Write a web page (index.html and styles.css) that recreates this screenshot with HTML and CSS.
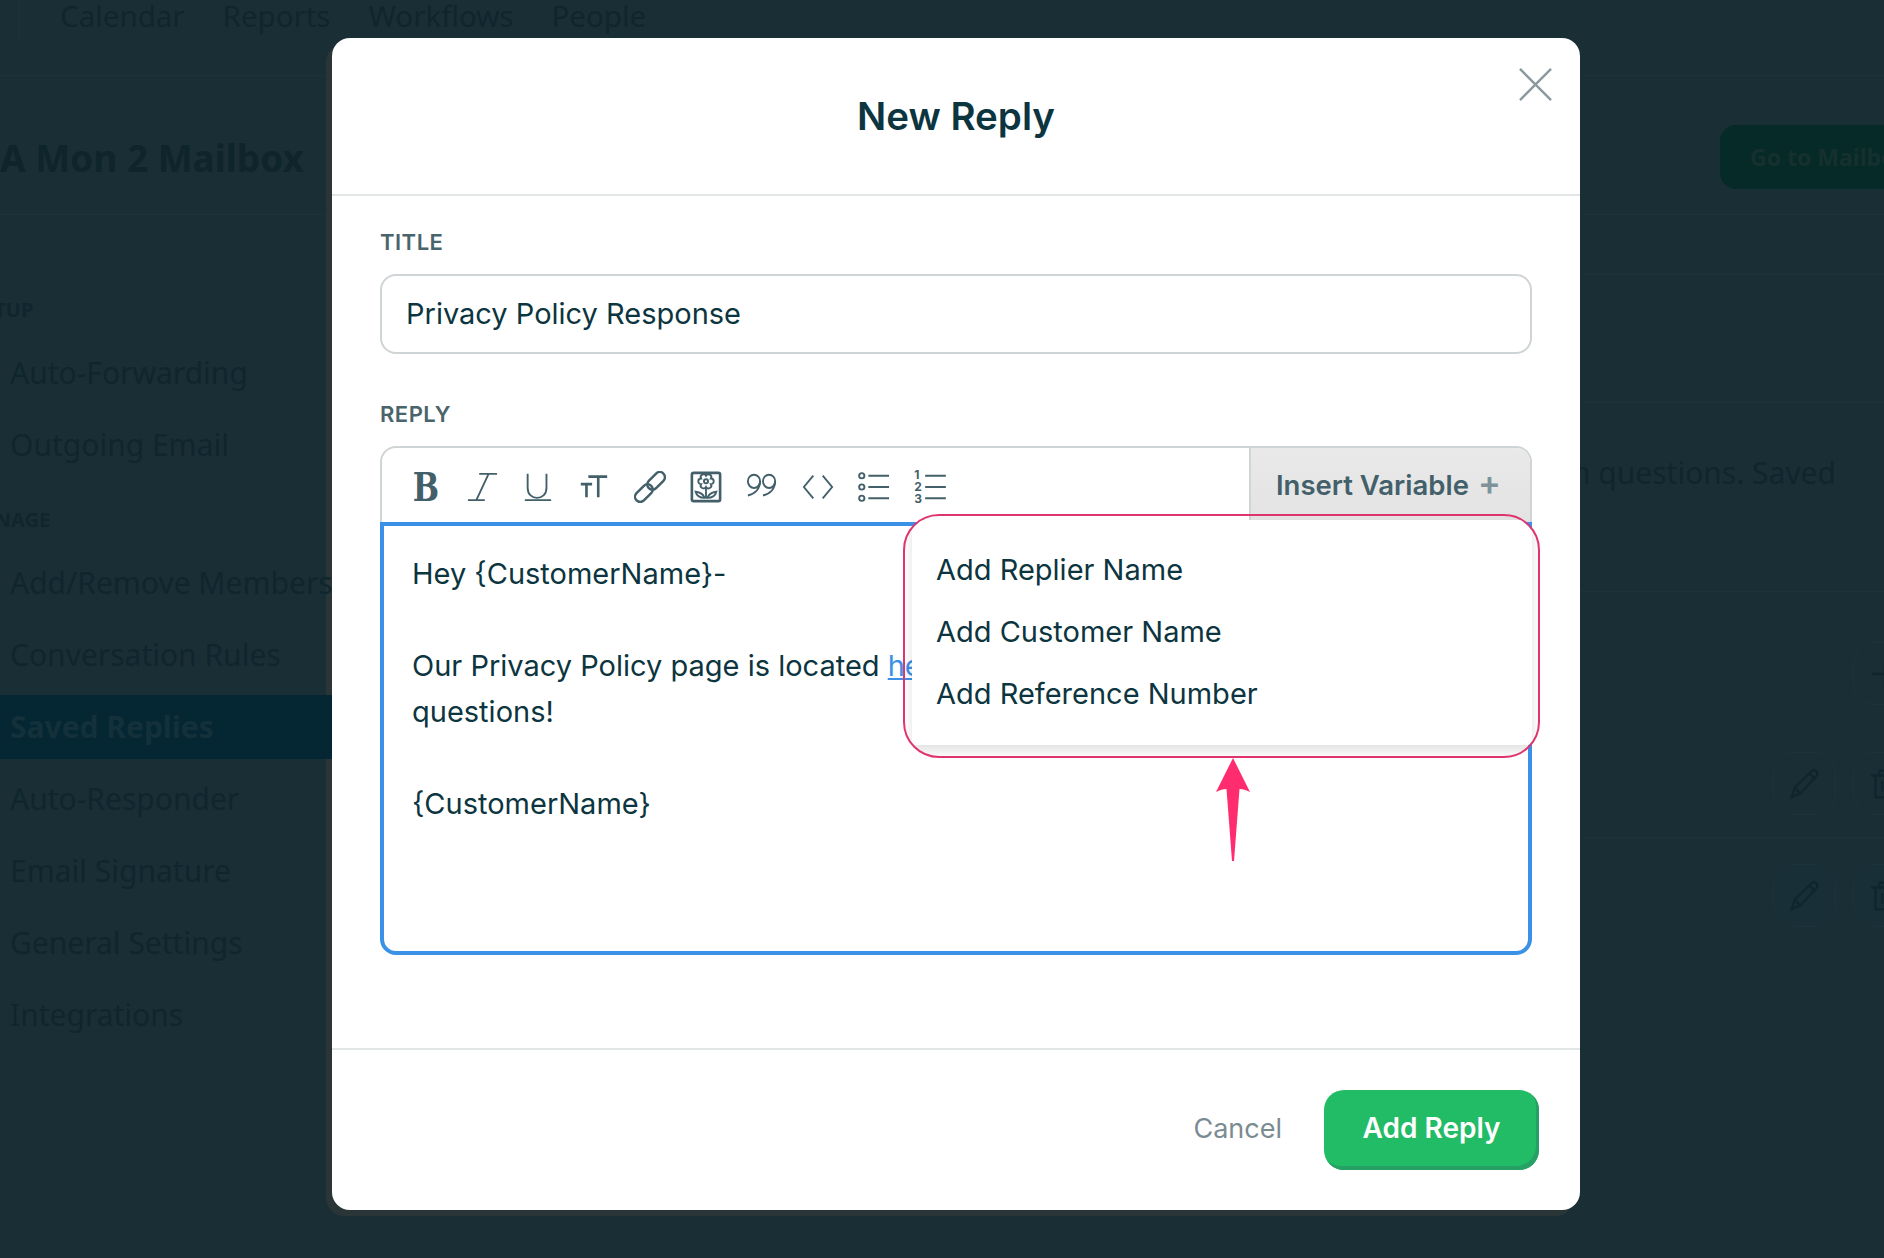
FILE: index.html
```html
<!DOCTYPE html>
<html lang="en">
<head>
    <meta charset="UTF-8">
    <meta name="viewport" content="width=device-width, initial-scale=1.0">
    <title>New Reply</title>
    <link rel="stylesheet" href="styles.css">
</head>
<body>
    <!-- dimmed page behind the dialog -->
    <div class="page">
        <nav class="topnav">
            <span class="topnav-rule"></span>
            <a class="topnav-link">Calendar</a>
            <a class="topnav-link">Reports</a>
            <a class="topnav-link">Workflows</a>
            <a class="topnav-link">People</a>
        </nav>
        <header class="page-header">
            <h1 class="page-title">A Mon 2 Mailbox</h1>
            <a class="goto-button">Go to Mailbox</a>
        </header>
        <div class="page-main">
            <aside class="sidebar">
                <div class="side-heading side-heading-first">SETUP</div>
                <a class="side-link">Auto-Forwarding</a>
                <a class="side-link">Outgoing Email</a>
                <div class="side-heading">MANAGE</div>
                <a class="side-link">Add/Remove Members</a>
                <a class="side-link">Conversation Rules</a>
                <a class="side-link side-link-active">Saved Replies</a>
                <a class="side-link">Auto-Responder</a>
                <a class="side-link">Email Signature</a>
                <a class="side-link">General Settings</a>
                <a class="side-link">Integrations</a>
            </aside>
            <section class="content">
                <div class="content-tabs"></div>
                <div class="content-heading"></div>
                <div class="content-desc">Use saved replies to answer common questions. Saved</div>
                <div class="list-head">
                    <span class="round-button">
                        <svg class="ghost-icon" viewBox="0 0 36 36"><path d="M4 18h28M18 4v28"/></svg>
                    </span>
                </div>
                <div class="list-row">
                    <span class="round-button">
                        <svg class="ghost-icon" viewBox="0 0 36 36"><path d="M4 32l3-10L25 4.500c1.500-1.500 3.500-1.500 5 0s1.500 3.500 0 5L13 28zM7 22l6 6M23 7l6 6"/></svg>
                    </span>
                    <span class="round-button">
                        <svg class="ghost-icon" viewBox="0 0 36 36"><path d="M3 9h30M12 9V4h12v5M8 9v23h20V9M15 15v11M21 15v11"/></svg>
                    </span>
                </div>
                <div class="list-row list-row-hover">
                    <span class="round-button">
                        <svg class="ghost-icon" viewBox="0 0 36 36"><path d="M4 32l3-10L25 4.500c1.500-1.500 3.500-1.500 5 0s1.500 3.500 0 5L13 28zM7 22l6 6M23 7l6 6"/></svg>
                    </span>
                    <span class="round-button">
                        <svg class="ghost-icon" viewBox="0 0 36 36"><path d="M3 9h30M12 9V4h12v5M8 9v23h20V9M15 15v11M21 15v11"/></svg>
                    </span>
                </div>
            </section>
        </div>
    </div>

    <div class="modal">
        <div class="modal-header">
            <h2 class="modal-title">New Reply</h2>
            <svg class="modal-close" viewBox="0 0 34 34"><path d="M1 1l32 32M33 1L1 33"/></svg>
        </div>

        <div class="modal-body">
            <div class="field-label">TITLE</div>
            <div class="text-input">Privacy Policy Response</div>

            <div class="field-label">REPLY</div>
            <div class="editor-wrap">
                <div class="toolbar">
                    <div class="tool-group">
                        <span class="tool tool-bold">B</span>
                        <span class="tool">
                            <svg class="tool-icon" viewBox="0 0 34 34"><path d="M14 3h19M2 31h18M24 3L11 31"/></svg>
                        </span>
                        <span class="tool">
                            <svg class="tool-icon" viewBox="0 0 34 34"><path d="M6 3v15c0 14 20 14 20 0V3M3 31h28"/></svg>
                        </span>
                        <span class="tool">
                            <svg class="tool-icon tool-icon-heavy" viewBox="0 0 34 34"><path d="M11 6h20M21.500 6v22M3 14h12M9 14v14"/></svg>
                        </span>
                        <span class="tool">
                            <svg class="tool-icon tool-icon-link" viewBox="0 0 34 34"><rect x="12.500" y="5" width="22" height="11" rx="5.500" transform="rotate(-45 23.500 10.500)"/><rect x="-0.500" y="18" width="22" height="11" rx="5.500" transform="rotate(-45 10.500 23.500)"/></svg>
                        </span>
                        <span class="tool">
                            <svg class="tool-icon tool-icon-heavy" viewBox="0 0 34 34"><rect x="2" y="2" width="30" height="30" rx="2"/><g class="flower"><circle cx="17" cy="11" r="2.200"/><path d="M17 5A3 3 0 0 1 22.200 8A3 3 0 0 1 22.200 14A3 3 0 0 1 17 17A3 3 0 0 1 11.800 14A3 3 0 0 1 11.800 8A3 3 0 0 1 17 5ZM17 17v12M15.500 28.500C14 24.500 10.500 22.500 6 22C7 26 10 28.500 15.500 28.500ZM18.500 28.500C20 24.500 23.500 22.500 28 22C27 26 24 28.500 18.500 28.500Z"/></g></svg>
                        </span>
                        <span class="tool">
                            <svg class="tool-icon" viewBox="0 0 34 34"><ellipse cx="8.500" cy="11" rx="6.500" ry="7"/><ellipse cx="24.500" cy="11" rx="6.500" ry="7"/><path d="M15 11c0 7-4.500 13-13 15M31 11c0 7-4.500 13-13 15"/></svg>
                        </span>
                        <span class="tool">
                            <svg class="tool-icon" viewBox="0 0 34 34"><path d="M12 5L2 17l10 12M22 5l10 12-10 12"/></svg>
                        </span>
                        <span class="tool">
                            <svg class="tool-icon" viewBox="0 0 34 34"><circle cx="4" cy="5" r="2.800"/><circle cx="4" cy="17" r="2.800"/><circle cx="4" cy="29" r="2.800"/><path d="M11 5h22M11 17h22M11 29h22"/></svg>
                        </span>
                        <span class="tool tool-ol">
                            <span class="ol-numbers"><span>1</span><span>2</span><span>3</span></span>
                            <svg class="tool-icon ol-lines" viewBox="0 0 22 34"><path d="M0 5h22M0 17h22M0 29h22"/></svg>
                        </span>
                    </div>
                    <div class="insert-variable">Insert Variable<span class="insert-plus">+</span></div>
                </div>

                <div class="editor">
                    <p class="editor-line">Hey {CustomerName}-</p>
                    <p class="editor-line">&nbsp;</p>
                    <p class="editor-line">Our Privacy Policy page is located <a class="editor-link">here</a>. Let us know if you have any</p>
                    <p class="editor-line">questions!</p>
                    <p class="editor-line">&nbsp;</p>
                    <p class="editor-line">{CustomerName}</p>
                </div>

                <div class="variable-ring">
                    <div class="variable-menu">
                        <div class="variable-item">Add Replier Name</div>
                        <div class="variable-item">Add Customer Name</div>
                        <div class="variable-item">Add Reference Number</div>
                    </div>
                </div>

                <svg class="callout-arrow" viewBox="0 0 36 104"><path d="M18 0L35 34C31 32 28 31 24.500 31L19 103H17L11.500 31C8 31 5 32 1 34Z"/></svg>
            </div>
        </div>

        <div class="modal-footer">
            <a class="cancel-link">Cancel</a>
            <a class="add-button">Add Reply</a>
        </div>
    </div>
</body>
</html>
```

FILE: styles.css
```css
* {
    box-sizing: border-box;
}
html, body {
    margin: 0;
    padding: 0;
    height: 100%;
}
body {
    font-family: 'Inter', 'Liberation Sans', sans-serif;
    background-color: #1a2e35;
    overflow: hidden;
    position: relative;
}

/* background page */
.page {
    height: 1258px;
    color: #0f262e;
    font-family: 'Noto Sans', 'Inter', sans-serif;
}
.topnav {
    display: flex;
    align-items: flex-start;
    height: 76px;
    padding-left: 19px;
    border-bottom: 1px solid #1e3239;
    font-size: 29.500px;
    line-height: 32px;
}
.topnav-rule {
    width: 1px;
    height: 40px;
    background-color: #1e3239;
    margin-right: 40px;
}
.topnav-link {
    margin-right: 38px;
}
.page-header {
    display: flex;
    align-items: center;
    justify-content: space-between;
    height: 139px;
    padding-top: 24px;
    border-bottom: 1px solid #1e3239;
}
.page-title {
    margin: 0;
    font-size: 37px;
    font-weight: 700;
    color: #0e252c;
}
.goto-button {
    width: 200px;
    height: 64px;
    margin-right: -36px;
    padding-left: 30px;
    background-color: #052a28;
    border-radius: 16px;
    color: #16302f;
    font-size: 23px;
    font-weight: 700;
    line-height: 64px;
    white-space: nowrap;
    overflow: hidden;
}
.page-main {
    display: flex;
}
.sidebar {
    position: relative;
    z-index: 1;
    width: 332px;
    flex-shrink: 0;
    padding-top: 81px;
    white-space: nowrap;
}
.side-heading {
    margin: 29px 0 17px -38px;
    font-size: 20px;
    font-weight: 700;
    line-height: 28px;
}
.side-heading-first {
    margin-top: 0;
    margin-left: -28px;
}
.side-link {
    display: block;
    height: 64px;
    margin-bottom: 8px;
    padding-left: 10px;
    font-size: 30px;
    line-height: 64px;
}
.side-link-active {
    background-color: #052733;
    color: #14303a;
    font-weight: 700;
}
.content {
    flex: 1;
    min-width: 0;
}
.content-tabs {
    height: 60px;
    border-bottom: 1px solid #1e3239;
}
.content-heading {
    height: 128px;
    border-bottom: 1px solid #1e3239;
}
.content-desc {
    display: flex;
    justify-content: flex-end;
    height: 189px;
    padding: 50px 48px 0 0;
    border-bottom: 1px solid #1e3239;
    font-size: 30px;
    line-height: 40px;
    white-space: nowrap;
}
.list-head {
    display: flex;
    justify-content: flex-end;
    height: 136px;
    padding-top: 50px;
    margin-right: -32px;
}
.list-row {
    display: flex;
    justify-content: flex-end;
    gap: 17px;
    height: 110px;
    padding-top: 24px;
    margin-right: -32px;
    border-bottom: 1px solid #1e3239;
}
.list-row-hover {
    padding-top: 26px;
    border-bottom: none;
}
.list-row-hover .round-button {
    background-color: #182f38;
}
.round-button {
    display: flex;
    align-items: center;
    justify-content: center;
    width: 63px;
    height: 63px;
    border: 1px solid #1e3239;
    border-radius: 22px;
}
.ghost-icon {
    width: 34px;
    height: 34px;
    fill: none;
    stroke: #0f262e;
    stroke-width: 2.500;
}

/* dialog */
.modal {
    position: absolute;
    left: 332px;
    top: 38px;
    display: flex;
    flex-direction: column;
    width: 1248px;
    height: 1172px;
    background-color: #ffffff;
    border-radius: 18px;
    box-shadow: -6px 6px 0 #2a3537;
    color: #0c3540;
}
.modal-header {
    position: relative;
    height: 158px;
    border-bottom: 2px solid #e3e6e7;
    text-align: center;
}
.modal-title {
    margin: 0;
    padding-top: 55px;
    font-size: 38.500px;
    font-weight: 600;
    line-height: 46px;
    color: #0c3540;
}
.modal-close {
    position: absolute;
    right: 28px;
    top: 30px;
    width: 33px;
    height: 33px;
    fill: none;
    stroke: #8b9a9e;
    stroke-width: 2.500;
}
.modal-body {
    flex: 1;
    padding: 32px 48px 0;
}
.field-label {
    margin-bottom: 18px;
    font-size: 22px;
    font-weight: 600;
    line-height: 28px;
    letter-spacing: 0.500px;
    color: #4a646c;
}
.text-input {
    height: 80px;
    margin-bottom: 46px;
    padding-left: 24px;
    border: 2px solid #cfd4d6;
    border-radius: 16px;
    font-size: 29px;
    line-height: 76px;
}
.editor-wrap {
    position: relative;
}
.toolbar {
    display: flex;
    justify-content: space-between;
    height: 76px;
    border: 2px solid #cfd4d6;
    border-bottom: none;
    border-radius: 16px 16px 0 0;
}
.tool-group {
    display: flex;
    align-items: center;
    padding: 3px 0 0 16px;
}
.tool {
    display: flex;
    align-items: center;
    justify-content: center;
    width: 56px;
    height: 34px;
}
.tool-bold {
    font-family: 'DejaVu Serif', serif;
    font-size: 39px;
    font-weight: 700;
    line-height: 34px;
    color: #43606a;
    transform: scaleX(0.800);
}
.tool-icon {
    width: 32px;
    height: 32px;
    fill: none;
    stroke: #43606a;
    stroke-width: 2;
}
.tool-icon-heavy {
    stroke-width: 2.800;
}
.tool-icon-link {
    stroke-width: 2.600;
}
.flower {
    stroke-width: 2;
}
.tool-ol {
    gap: 3px;
}
.ol-numbers {
    display: flex;
    flex-direction: column;
    font-size: 12px;
    font-weight: 700;
    line-height: 12px;
    color: #43606a;
}
.ol-lines {
    width: 21px;
}
.insert-variable {
    width: 281px;
    padding: 14px 0 0 25px;
    background: linear-gradient(#e9e9e9, #e3e3e3);
    border-left: 2px solid #cfd4d6;
    border-top-right-radius: 14px;
    font-size: 27.500px;
    font-weight: 600;
    line-height: 46px;
    color: #43606a;
    white-space: nowrap;
}
.insert-plus {
    margin-left: 9px;
    font-size: 34px;
    font-weight: 600;
    line-height: 0;
    color: #7d9399;
}
.editor {
    height: 433px;
    padding: 25px 28px;
    border: 4px solid #3b90e8;
    border-radius: 0 0 16px 16px;
    font-size: 29px;
    line-height: 46px;
    white-space: nowrap;
    overflow: hidden;
}
.editor-line {
    margin: 0;
}
.editor-link {
    color: #3b90e8;
    text-decoration: underline;
}
.variable-ring {
    position: absolute;
    left: 523px;
    right: -8px;
    top: 68px;
    height: 244px;
    padding: 4px 6px 11px 7px;
    border: 2px solid #e0346f;
    border-radius: 36px;
    overflow: hidden;
}
.variable-menu {
    height: 100%;
    padding: 19px 0 21px;
    background-color: #ffffff;
    border-radius: 4px;
    box-shadow: 0 6px 12px rgba(0, 0, 0, 0.12);
}
.variable-item {
    height: 62px;
    padding-left: 24px;
    font-size: 29px;
    line-height: 62px;
}
.callout-arrow {
    position: absolute;
    left: 835px;
    top: 312px;
    width: 36px;
    height: 104px;
    fill: #ff2d6f;
}
.modal-footer {
    display: flex;
    align-items: center;
    justify-content: flex-end;
    gap: 42px;
    height: 162px;
    padding-right: 41px;
    border-top: 2px solid #e3e6e7;
}
.cancel-link {
    margin-top: -3px;
    font-size: 27px;
    color: #7b8b92;
}
.add-button {
    width: 215px;
    height: 80px;
    background-color: #22bb66;
    border-radius: 20px;
    box-shadow: inset -3px -4px 0 #27a065;
    color: #ffffff;
    font-size: 28px;
    font-weight: 600;
    line-height: 76px;
    text-align: center;
}
```
